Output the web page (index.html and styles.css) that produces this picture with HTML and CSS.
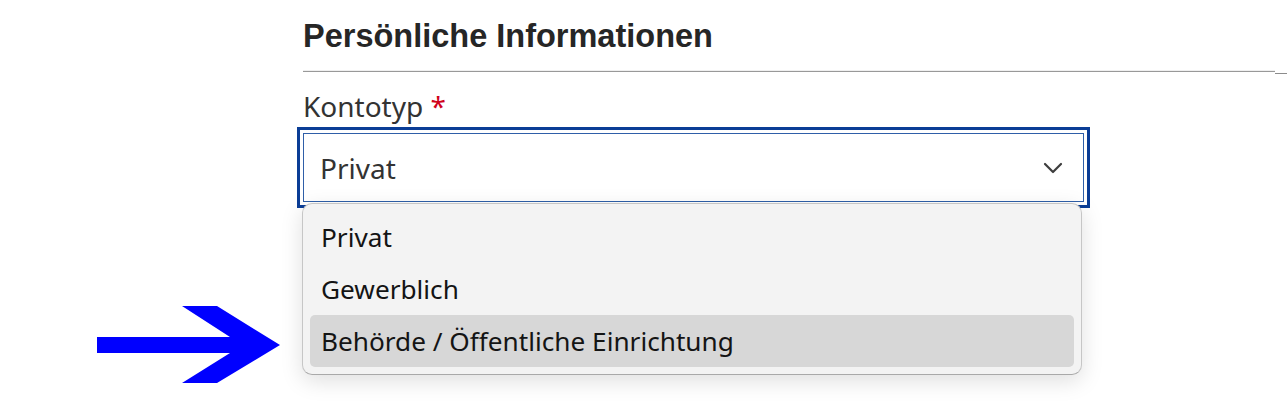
FILE: index.html
```html
<!DOCTYPE html>
<html lang="de">
<head>
<meta charset="utf-8">
<title>Persönliche Informationen</title>
<link rel="stylesheet" href="styles.css">
</head>
<body>
<main class="page">
  <h2 class="section-title">Persönliche Informationen</h2>
  <div class="rule"><span class="rule-main"></span><span class="rule-tail"></span></div>
  <div class="field">
    <label class="field-label">Kontotyp <span class="required">*</span></label>
    <div class="select-wrap">
      <div class="select">
        <span class="select-value">Privat</span>
        <svg class="chevron" width="20" height="12" viewBox="0 0 20 12"><path d="M2 2 L10 10 L18 2" fill="none" stroke="#3d3d3d" stroke-width="2.2" stroke-linecap="round" stroke-linejoin="round"/></svg>
      </div>
      <ul class="menu">
        <li class="menu-item">Privat</li>
        <li class="menu-item">Gewerblich</li>
        <li class="menu-item is-active">Behörde / Öffentliche Einrichtung</li>
      </ul>
    </div>
  </div>
</main>
<svg class="pointer-arrow" width="190" height="80" viewBox="0 0 190 80">
  <polygon points="0,31 133,31 85,0 120,0 183,39 120,77 85,77 133,47 0,47" fill="#0000ff"/>
</svg>
</body>
</html>
```
FILE: styles.css
```css
html, body {
  margin: 0;
  padding: 0;
  background: #ffffff;
}
body {
  width: 1287px;
  height: 414px;
  overflow: hidden;
  position: relative;
}
.page {
  padding-left: 303px;
  padding-top: 18px;
}
.section-title {
  margin: 0;
  font-family: "Liberation Sans", Arial, sans-serif;
  font-weight: 700;
  font-size: 32.5px;
  line-height: 36px;
  color: #262626;
}
.rule {
  display: flex;
  margin-top: 17px;
}
.rule-main {
  flex: 1;
  border-top: 1px solid #999999;
  box-shadow: 0 -1px 0 #efefef;
}
.rule-tail {
  width: 12px;
  margin-top: 2px;
  border-top: 1px solid #8c8c8c;
}
.field {
  margin-top: 14px;
  width: 781px;
  font-family: "Noto Sans", "Open Sans", sans-serif;
}
.field-label {
  display: block;
  font-size: 28px;
  line-height: 36px;
  color: #333333;
}
.required {
  color: #d0021b;
}
.select-wrap {
  position: relative;
  margin-top: 9px;
}
.select {
  box-sizing: border-box;
  height: 69px;
  border: 1px solid #2f5fa8;
  outline: 3px solid #0a3d96;
  outline-offset: 3px;
  background: #ffffff;
  display: flex;
  align-items: center;
  justify-content: space-between;
  padding: 0 20px 0 16px;
}
.select-value {
  font-size: 28px;
  line-height: 36px;
  color: #333333;
}
.chevron {
  display: block;
}
.menu {
  position: absolute;
  top: 100%;
  left: -1px;
  right: 2px;
  margin: 1px 0 0;
  padding: 7px;
  list-style: none;
  background: #f3f3f3;
  border: 1px solid #c6c6c6;
  border-bottom-color: #a9a9a9;
  border-radius: 10px;
  box-shadow: 0 6px 22px rgba(0, 0, 0, 0.13);
}
.menu-item {
  height: 52px;
  display: flex;
  align-items: center;
  padding-left: 11px;
  font-size: 26.2px;
  color: #141414;
  border-radius: 5px;
}
.menu-item.is-active {
  background: #d7d7d7;
}
.pointer-arrow {
  position: absolute;
  left: 97px;
  top: 306px;
  display: block;
}
```
